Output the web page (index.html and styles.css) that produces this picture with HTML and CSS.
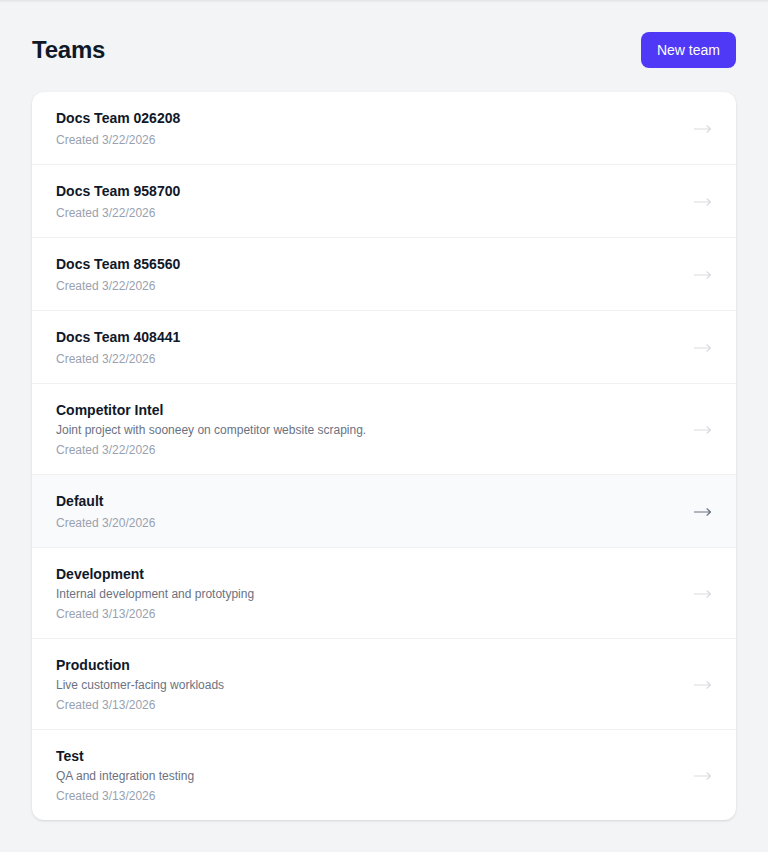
FILE: index.html
```html
<!DOCTYPE html>
<html lang="en">
<head>
<meta charset="utf-8">
<title>Teams</title>
<link rel="stylesheet" href="styles.css">
</head>
<body>
<div class="topshade"></div>
<main class="page">
  <header class="head">
    <h1 class="title">Teams</h1>
    <button class="btn">New team</button>
  </header>
  <ul class="list">
    <li class="row"><div class="info"><div class="name">Docs Team 026208</div><div class="date">Created 3/22/2026</div></div><svg class="arrow" viewBox="0 0 18 10"><path d="M0 5H16.5M13 1.8L16.5 5L13 8.2"/></svg></li>
    <li class="row"><div class="info"><div class="name">Docs Team 958700</div><div class="date">Created 3/22/2026</div></div><svg class="arrow" viewBox="0 0 18 10"><path d="M0 5H16.5M13 1.8L16.5 5L13 8.2"/></svg></li>
    <li class="row"><div class="info"><div class="name">Docs Team 856560</div><div class="date">Created 3/22/2026</div></div><svg class="arrow" viewBox="0 0 18 10"><path d="M0 5H16.5M13 1.8L16.5 5L13 8.2"/></svg></li>
    <li class="row"><div class="info"><div class="name">Docs Team 408441</div><div class="date">Created 3/22/2026</div></div><svg class="arrow" viewBox="0 0 18 10"><path d="M0 5H16.5M13 1.8L16.5 5L13 8.2"/></svg></li>
    <li class="row"><div class="info"><div class="name">Competitor Intel</div><div class="desc">Joint project with sooneey on competitor website scraping.</div><div class="date">Created 3/22/2026</div></div><svg class="arrow" viewBox="0 0 18 10"><path d="M0 5H16.5M13 1.8L16.5 5L13 8.2"/></svg></li>
    <li class="row active"><div class="info"><div class="name">Default</div><div class="date">Created 3/20/2026</div></div><svg class="arrow" viewBox="0 0 18 10"><path d="M0 5H16.5M13 1.8L16.5 5L13 8.2"/></svg></li>
    <li class="row"><div class="info"><div class="name">Development</div><div class="desc">Internal development and prototyping</div><div class="date">Created 3/13/2026</div></div><svg class="arrow" viewBox="0 0 18 10"><path d="M0 5H16.5M13 1.8L16.5 5L13 8.2"/></svg></li>
    <li class="row"><div class="info"><div class="name">Production</div><div class="desc">Live customer-facing workloads</div><div class="date">Created 3/13/2026</div></div><svg class="arrow" viewBox="0 0 18 10"><path d="M0 5H16.5M13 1.8L16.5 5L13 8.2"/></svg></li>
    <li class="row"><div class="info"><div class="name">Test</div><div class="desc">QA and integration testing</div><div class="date">Created 3/13/2026</div></div><svg class="arrow" viewBox="0 0 18 10"><path d="M0 5H16.5M13 1.8L16.5 5L13 8.2"/></svg></li>
  </ul>
</main>
</body>
</html>
```
FILE: styles.css
```css
* { box-sizing: border-box; }
html, body { margin: 0; padding: 0; }
body {
  background: #f3f4f6;
  font-family: "Liberation Sans", Arial, sans-serif;
  color: #101828;
  min-height: 100vh;
}
.topshade {
  height: 1px;
  background: #e3e5e9;
  box-shadow: 0 1px 2px rgba(0, 0, 0, 0.06);
}
.page {
  padding: 31px 32px 32px;
}
.head {
  display: flex;
  align-items: center;
  justify-content: space-between;
  height: 36px;
  margin-bottom: 24px;
}
.title {
  margin: 0;
  font-size: 24px;
  line-height: 32px;
  font-weight: 700;
  letter-spacing: -0.2px;
  color: #101828;
}
.btn {
  height: 36px;
  padding: 0 16px;
  border: 0;
  border-radius: 8px;
  background: #4f39f6;
  color: #fff;
  font-family: inherit;
  font-size: 14px;
}
.list {
  list-style: none;
  margin: 0;
  padding: 0;
  background: #fff;
  border-radius: 12px;
  box-shadow: 0 1px 3px rgba(0, 0, 0, 0.1), 0 1px 2px -1px rgba(0, 0, 0, 0.1);
  overflow: hidden;
}
.row {
  display: flex;
  align-items: center;
  justify-content: space-between;
  padding: 16px 24px;
  border-top: 1px solid #f0f1f3;
}
.row:first-child { border-top: 0; }
.row.active { background: #f9fafb; }
.info { display: flex; flex-direction: column; }
.name {
  font-size: 14px;
  line-height: 20px;
  font-weight: 700;
  color: #101828;
}
.desc {
  margin-top: 2px;
  font-size: 12px;
  line-height: 16px;
  color: #6a7282;
}
.date {
  margin-top: 4px;
  font-size: 12px;
  line-height: 16px;
  color: #99a1af;
}
.arrow {
  width: 18px;
  height: 10px;
  margin-top: 1px;
  fill: none;
  stroke: #d8dbe0;
  stroke-width: 1.2;
  stroke-linecap: round;
  stroke-linejoin: round;
}
.row.active .arrow { stroke: #6a7282; }
```
